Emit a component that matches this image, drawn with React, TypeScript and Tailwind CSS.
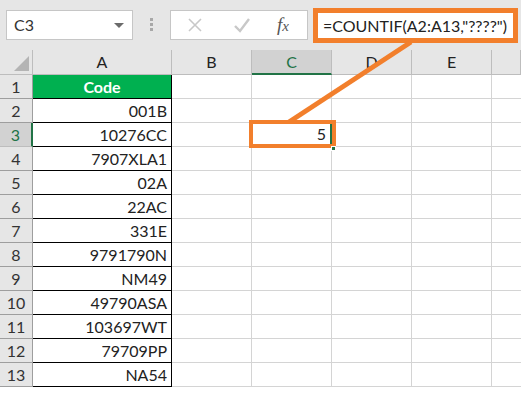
import React from 'react';

const codes = ['001B', '10276CC', '7907XLA1', '02A', '22AC', '331E', '9791790N', 'NM49', '49790ASA', '103697WT', '79709PP', 'NA54'];
const cols = ['A', 'B', 'C', 'D', 'E', ''];
const orange = '#f27f2c';

const App: React.FC = () => {
  const rows = Array.from({ length: 13 }, (_, i) => i + 1);

  return (
    <div
      className="relative w-[521px] h-[394px] overflow-hidden bg-white text-[#222]"
      style={{ fontFamily: 'Lato, "Open Sans", sans-serif' }}
    >
      {/* formula bar */}
      <div className="flex items-start h-[50px] bg-[#e6e6e6] pl-[6px]">
        <div className="mt-[10px] w-[127px] h-[30px] bg-white border border-[#c6c6c6] flex items-center justify-between pl-[7px] pr-[8px]">
          <span className="text-[16px] text-[#333]">C3</span>
          <span className="w-0 h-0 border-l-[5px] border-r-[5px] border-t-[5px] border-l-transparent border-r-transparent border-t-[#6b6b6b]" />
        </div>
        <div className="mt-[18px] w-[37px] flex flex-col items-center gap-[2px]">
          <span className="w-[3px] h-[3px] bg-[#a8a8a8]" />
          <span className="w-[3px] h-[3px] bg-[#a8a8a8]" />
          <span className="w-[3px] h-[3px] bg-[#a8a8a8]" />
        </div>
        <div className="mt-[10px] w-[138px] h-[30px] bg-white border border-[#c6c6c6] flex items-center pl-[16px]">
          <svg width="16" height="16" viewBox="0 0 16 16">
            <path d="M2 2 L14 14 M14 2 L2 14" stroke="#c8c8c8" strokeWidth="1.6" fill="none" />
          </svg>
          <svg width="18" height="16" viewBox="0 0 18 16" className="ml-[30px]">
            <path d="M2 9 L7 14 L16 2" stroke="#c8c8c8" strokeWidth="2.4" fill="none" />
          </svg>
          <span className="ml-[26px] text-[19px] italic text-[#555]" style={{ fontFamily: '"Liberation Serif", serif' }}>
            f<span className="text-[15px]">x</span>
          </span>
        </div>
        <div
          className="ml-[5px] mt-[8px] w-[205px] h-[35px] bg-white border-[5px] flex items-center pl-[5px] text-[16px] text-[#222] whitespace-nowrap"
          style={{ borderColor: orange }}
        >
          =COUNTIF(A2:A13,"????")
        </div>
      </div>

      {/* sheet */}
      <div className="grid grid-cols-[33px_139px_80px_80px_80px_80px_1fr]">
        <div className="h-[25px] bg-[#e6e6e6] border-r border-b border-[#bdbdbd] flex items-end justify-end pr-[3px] pb-[3px]">
          <span className="w-0 h-0 border-l-[15px] border-t-[15px] border-l-transparent border-t-transparent border-b-0 border-r-0 relative">
            <span className="absolute -left-[15px] -top-[15px] w-0 h-0 border-l-[15px] border-b-[15px] border-l-transparent border-b-[#b4b4b4]" />
          </span>
        </div>
        {cols.map((c) =>
          c === 'C' ? (
            <div key={c} className="h-[25px] bg-[#d2d2d2] border-r border-[#bdbdbd] border-b-2 border-b-[#217346] flex items-center justify-center text-[16px] text-[#217346]">
              {c}
            </div>
          ) : (
            <div key={c || 'F'} className="h-[25px] bg-[#e6e6e6] border-r border-b border-[#bdbdbd] flex items-center justify-center text-[16px] text-[#222]">
              {c}
            </div>
          )
        )}

        {rows.map((r) => (
          <React.Fragment key={r}>
            <div
              className={
                r === 3
                  ? 'h-[24px] bg-[#d2d2d2] border-b border-[#bdbdbd] border-r-2 border-r-[#217346] flex items-center justify-center text-[16px] text-[#217346]'
                  : 'h-[24px] bg-[#e6e6e6] border-r border-b border-[#9e9e9e] flex items-center justify-center text-[16px] text-[#333]'
              }
            >
              {r}
            </div>
            {r === 1 ? (
              <div className="h-[24px] bg-[#00b050] border-r border-b border-black flex items-center justify-center text-[16px] font-bold text-white">
                Code
              </div>
            ) : (
              <div className="h-[24px] border-r border-b border-black flex items-center justify-end pr-[4px] text-[16px]">
                {codes[r - 2]}
              </div>
            )}
            <div className="h-[24px] border-r border-b border-[#d4d4d4]" />
            {r === 3 ? (
              <div className="h-[24px] border-2 border-[#217346] -mt-[1px] -ml-[1px] flex items-center justify-end pr-[4px] text-[16px]">
                5
              </div>
            ) : (
              <div className="h-[24px] border-r border-b border-[#d4d4d4]" />
            )}
            <div className="h-[24px] border-r border-b border-[#d4d4d4]" />
            <div className="h-[24px] border-r border-b border-[#d4d4d4]" />
            <div className="h-[24px] border-b border-[#d4d4d4]" />
          </React.Fragment>
        ))}
      </div>

      {/* annotation */}
      <svg className="absolute left-0 top-0 pointer-events-none" width="521" height="394">
        <line x1="289" y1="122" x2="411" y2="42" stroke={orange} strokeWidth="5" />
      </svg>
      <div className="absolute left-[249px] top-[120px] w-[87px] h-[28px] border-[4px]" style={{ borderColor: orange }} />
      <div className="absolute left-[331px] top-[146px] w-[5px] h-[5px] bg-[#217346] border border-white" />
    </div>
  );
};

export default App;
